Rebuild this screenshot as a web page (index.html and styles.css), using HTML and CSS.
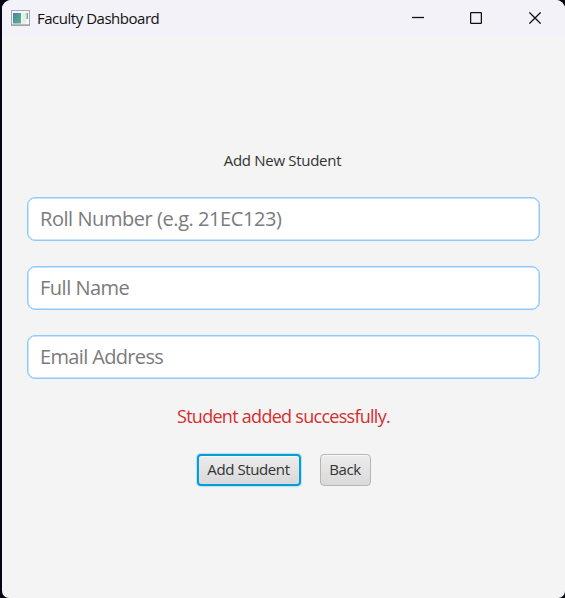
FILE: index.html
```html
<!DOCTYPE html>
<html lang="en">
<head>
<meta charset="utf-8">
<title>Faculty Dashboard</title>
<link rel="stylesheet" href="styles.css">
</head>
<body>
<div class="window">
  <header class="titlebar">
    <svg class="app-icon" width="19" height="16" viewBox="0 0 19 16">
      <defs>
        <linearGradient id="pane" x1="0" y1="0" x2="1" y2="1">
          <stop offset="0" stop-color="#4582a6"/>
          <stop offset="1" stop-color="#62b389"/>
        </linearGradient>
      </defs>
      <rect x=".5" y=".5" width="18" height="14.5" fill="#f5f7f7" stroke="#a5a9ae"/>
      <path d="M0 15.2H19" stroke="#8e9296"/>
      <rect x="2" y="3" width="8" height="10.5" fill="url(#pane)"/>
      <rect x="11" y="3" width="4" height="10.5" fill="#e5eeeb"/>
      <rect x="15.5" y="3" width="1.5" height="6" fill="#68ac9d"/>
    </svg>
    <span class="title">Faculty Dashboard</span>
    <div class="controls">
      <svg width="12" height="12" viewBox="0 0 12 12"><path d="M0 5.5H12"/></svg>
      <svg width="12" height="12" viewBox="0 0 12 12"><rect x=".6" y=".6" width="10.8" height="10.8" rx="1"/></svg>
      <svg class="close" width="12" height="12" viewBox="0 0 12 12"><path d="M.4 .4L11.6 11.6M11.6 .4L.4 11.6"/></svg>
    </div>
  </header>
  <main class="form">
    <div class="heading">Add New Student</div>
    <div class="field roll">Roll Number (e.g. 21EC123)</div>
    <div class="field name">Full Name</div>
    <div class="field email">Email Address</div>
    <div class="status">Student added successfully.</div>
    <div class="actions">
      <button class="button primary">Add Student</button>
      <button class="button back">Back</button>
    </div>
  </main>
</div>
</body>
</html>
```
FILE: styles.css
```css
* { box-sizing: border-box; }
body {
  margin: 0;
  height: 598px;
  padding-left: 2px;
  overflow: hidden;
  background: #060611;
  font-family: "Open Sans", "Noto Sans", sans-serif;
}
.window {
  height: 598px;
  border-radius: 9px 9px 7px 7px;
  background: #f4f4f4;
  overflow: hidden;
}
.titlebar {
  height: 37px;
  padding: 0 24px 0 9px;
  display: flex;
  align-items: center;
  background: #f2f2f8;
}
.app-icon { margin-bottom: 2px; }
.title {
  margin: 0 0 2px 7px;
  font-size: 15px;
  letter-spacing: -0.48px;
  color: #111;
}
.controls {
  margin-left: auto;
  display: flex;
  gap: 46px;
  padding-bottom: 1px;
}
.controls svg {
  fill: none;
  stroke: #111;
  stroke-width: 1.3;
}
.controls svg:not(.close) {
  position: relative;
  left: -1px;
}
.form {
  padding: 112px 25px 0;
  display: flex;
  flex-direction: column;
}
.heading {
  height: 24px;
  margin-bottom: 24px;
  padding-right: 2px;
  line-height: 22px;
  text-align: center;
  font-size: 15px;
  letter-spacing: -0.3px;
  color: #333;
}
.field {
  height: 44px;
  margin-bottom: 25px;
  padding: 0 12px;
  border: 1px solid #90caf9;
  border-radius: 8px;
  background: #fff;
  box-shadow: inset 0 0 0 0.5px #90caf9;
  line-height: 42px;
  font-size: 20px;
  letter-spacing: -0.44px;
  color: #7b7b7b;
}
.name { letter-spacing: -0.5px; }
.email { letter-spacing: -0.65px; }
.status {
  height: 26px;
  line-height: 25px;
  text-align: center;
  font-size: 18px;
  letter-spacing: -0.72px;
  color: #d32f2f;
}
.actions {
  margin-top: 24px;
  display: flex;
  justify-content: center;
  gap: 19px;
}
.button {
  width: 51px;
  height: 32px;
  padding: 0 0 3px;
  border: 1px solid #b5b5b5;
  border-radius: 4px;
  background: linear-gradient(#ececec, #d9d9d9);
  box-shadow: inset 0 1px #f8f8f8;
  font: 15px/24px "Open Sans", "Noto Sans", sans-serif;
  letter-spacing: -0.4px;
  color: #333;
}
.primary {
  width: 104px;
  border: 2px solid #039ed3;
  box-shadow: 0 0 1px 1px #b5e2f2, inset 0 1px #f8f8f8;
}
```
